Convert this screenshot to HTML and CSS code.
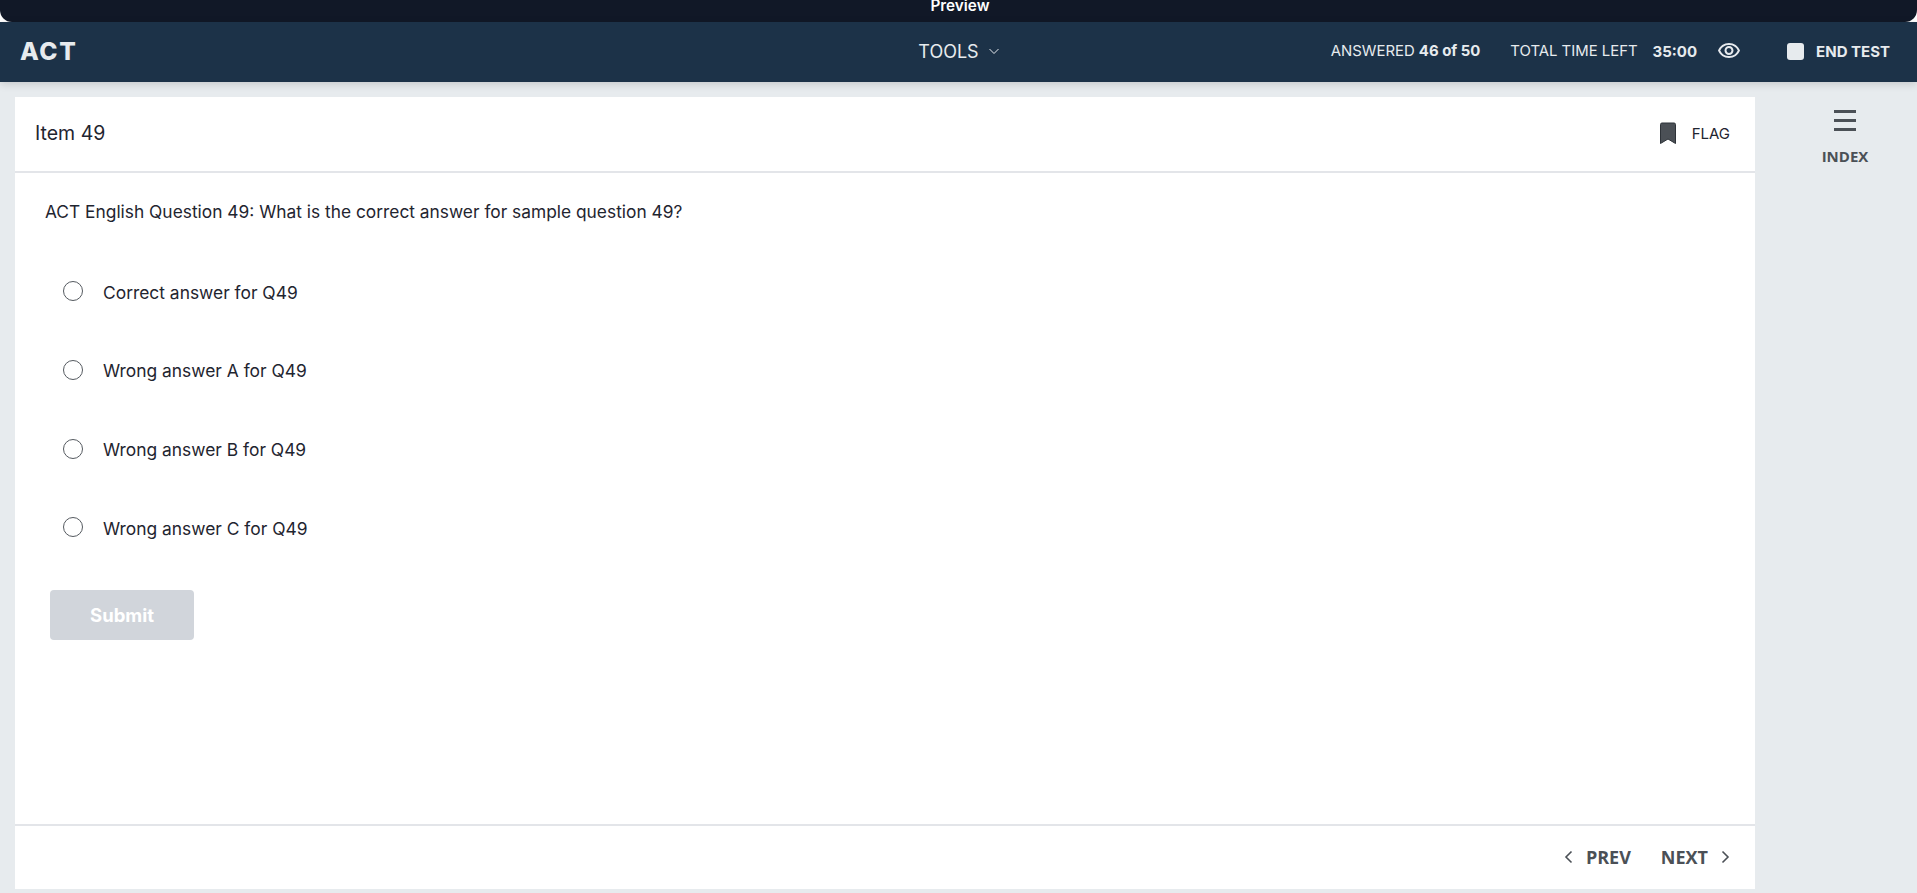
FILE: index.html
```html
<!DOCTYPE html>
<html lang="en">
<head>
<meta charset="utf-8">
<title>ACT Preview</title>
<link rel="stylesheet" href="styles.css">
</head>
<body>
<div class="preview-bar"><span>Preview</span></div>
<header class="topbar">
  <div class="logo">ACT</div>
  <button class="tools">TOOLS
    <svg class="chev" width="12" height="7" viewBox="0 0 12 7"><path d="M1.500 1l4.500 4.500L10.500 1" fill="none" stroke="#e7eaee" stroke-width="1"/></svg>
  </button>
  <div class="status">
    <span class="answered">ANSWERED <b>46 of 50</b></span>
    <span class="timeleft">TOTAL TIME LEFT</span>
    <b class="time">35:00</b>
    <svg class="eye" width="24" height="24" viewBox="0 0 24 24"><path fill="#e7eaee" d="M12 6a9.77 9.77 0 0 1 8.82 5.5A9.77 9.77 0 0 1 12 17a9.77 9.77 0 0 1-8.82-5.5A9.77 9.77 0 0 1 12 6m0-2C7 4 2.73 7.11 1 11.5 2.73 15.89 7 19 12 19s9.27-3.11 11-7.5C21.27 7.11 17 4 12 4zm0 5a2.5 2.5 0 0 1 0 5 2.5 2.5 0 0 1 0-5m0-2c-2.48 0-4.5 2.02-4.5 4.5S9.52 16 12 16s4.5-2.02 4.5-4.5S14.48 7 12 7z"/></svg>
    <span class="end-box"></span>
    <b class="end">END TEST</b>
  </div>
</header>
<div class="workspace">
  <main class="card">
    <div class="card-head">
      <div class="item-title">Item 49</div>
      <div class="flag">
        <svg width="18" height="23" viewBox="0 0 18 23"><path d="M1.500 2.500a1.500 1.500 0 0 1 1.500-1.500h12a1.500 1.500 0 0 1 1.500 1.500V21.500L9 17 1.500 21.500z" fill="#4b5056" stroke="#2d3238" stroke-width="1"/></svg>
        <span>FLAG</span>
      </div>
    </div>
    <div class="card-body">
      <p class="question">ACT English Question 49: What is the correct answer for sample question 49?</p>
      <div class="options">
        <label class="option"><span class="radio"></span><span>Correct answer for Q49</span></label>
        <label class="option"><span class="radio"></span><span>Wrong answer A for Q49</span></label>
        <label class="option"><span class="radio"></span><span>Wrong answer B for Q49</span></label>
        <label class="option"><span class="radio"></span><span>Wrong answer C for Q49</span></label>
      </div>
      <button class="submit">Submit</button>
    </div>
    <div class="card-foot">
      <div class="nav-btn">
        <svg width="9" height="14" viewBox="0 0 9 14"><path d="M7.500 1.500L2 7l5.500 5.500" fill="none" stroke="#4b5056" stroke-width="1.600"/></svg>
        <span>PREV</span>
      </div>
      <div class="nav-btn">
        <span>NEXT</span>
        <svg width="9" height="14" viewBox="0 0 9 14"><path d="M1.500 1.500L7 7l-5.500 5.500" fill="none" stroke="#4b5056" stroke-width="1.600"/></svg>
      </div>
    </div>
  </main>
  <aside class="side">
    <div class="burger"><i></i><i></i><i></i></div>
    <div class="index-label">INDEX</div>
  </aside>
</div>
</body>
</html>
```

FILE: styles.css
```css
* { box-sizing: border-box; }
html, body { margin: 0; height: 100%; }
body {
  width: 1917px;
  height: 893px;
  overflow: hidden;
  background: #fff;
  font-family: "Inter", "Noto Sans", sans-serif;
  color: #1f2530;
  display: flex;
  flex-direction: column;
}
.preview-bar {
  height: 22px;
  flex: none;
  background: #111827;
  border-radius: 0 0 12px 12px;
  color: #fff;
  font-size: 15.300px;
  font-weight: 600;
  line-height: 12px;
  text-align: center;
  overflow: hidden;
  padding-left: 3px;
}
.topbar {
  height: 60px;
  flex: none;
  background: #1c3248;
  color: #e7ebee;
  display: grid;
  grid-template-columns: 1fr auto 1fr;
  align-items: center;
  padding: 0 27px 2px 20px;
  box-shadow: 0 2px 8px rgba(0, 0, 0, .15);
  position: relative;
  z-index: 1;
}
.logo {
  font-size: 24.500px;
  font-weight: 800;
  letter-spacing: 1.600px;
}
.tools {
  background: none;
  border: 0;
  color: #e7ebee;
  font: inherit;
  font-size: 18px;
  display: flex;
  align-items: center;
  gap: 9px;
  padding: 0;
  margin-left: 8px;
}
.status {
  justify-self: end;
  display: flex;
  align-items: center;
  font-size: 14.900px;
}
.status b { font-weight: 700; }
.timeleft { margin-left: 30px; }
.time { margin-left: 15px; font-size: 15px; }
.eye { margin-left: 20px; }
.end-box {
  width: 17px;
  height: 17px;
  background: #e7ebee;
  border-radius: 3px;
  margin-left: 46px;
}
.end { margin-left: 12px; font-size: 15px; }
.workspace {
  flex: 1;
  background: #e7ebee;
  display: flex;
  padding: 15px 0 4px 15px;
  min-height: 0;
}
.card {
  width: 1740px;
  background: #fff;
  display: flex;
  flex-direction: column;
}
.card-head {
  height: 76px;
  flex: none;
  border-bottom: 2px solid #e3e5e9;
  display: flex;
  align-items: center;
  justify-content: space-between;
  padding: 0 25px 2px 20px;
}
.item-title { font-size: 19.500px; }
.flag {
  display: flex;
  align-items: center;
  gap: 15px;
  font-size: 15px;
}
.card-body { flex: 1; padding: 27px 30px 0; }
.question { margin: 0; font-size: 17.350px; line-height: 24px; }
.options {
  margin: 29px 0 0 18px;
  display: flex;
  flex-direction: column;
}
.option {
  height: 78.670px;
  display: flex;
  align-items: center;
  gap: 20px;
  font-size: 17.400px;
}
.radio {
  width: 20px;
  height: 20px;
  flex: none;
  border: 1px solid #555a60;
  border-radius: 50%;
  background: #fff;
  position: relative;
  top: -1px;
}
.submit {
  display: block;
  margin: 22px 0 0 5px;
  width: 144px;
  height: 50px;
  border: 0;
  border-radius: 4px;
  background: #d1d5db;
  color: #fff;
  font: inherit;
  font-size: 18.500px;
  font-weight: 700;
}
.card-foot {
  height: 65px;
  flex: none;
  border-top: 2px solid #e3e5e9;
  display: flex;
  justify-content: flex-end;
  align-items: center;
  gap: 30px;
  padding: 0 25px 2px 0;
}
.nav-btn {
  display: flex;
  align-items: center;
  gap: 13px;
  font-family: "Open Sans", sans-serif;
  font-size: 18px;
  font-weight: 700;
  color: #4b5056;
}
.side {
  flex: 1;
  display: flex;
  flex-direction: column;
  align-items: center;
  padding: 13px 0 0 18px;
  color: #4b5056;
}
.burger {
  width: 22px;
  display: flex;
  flex-direction: column;
  gap: 6.500px;
}
.burger i { height: 2.500px; background: #4b5056; display: block; }
.index-label { margin-top: 15px; font-family: "Open Sans", sans-serif; font-size: 15px; font-weight: 700; }
```
